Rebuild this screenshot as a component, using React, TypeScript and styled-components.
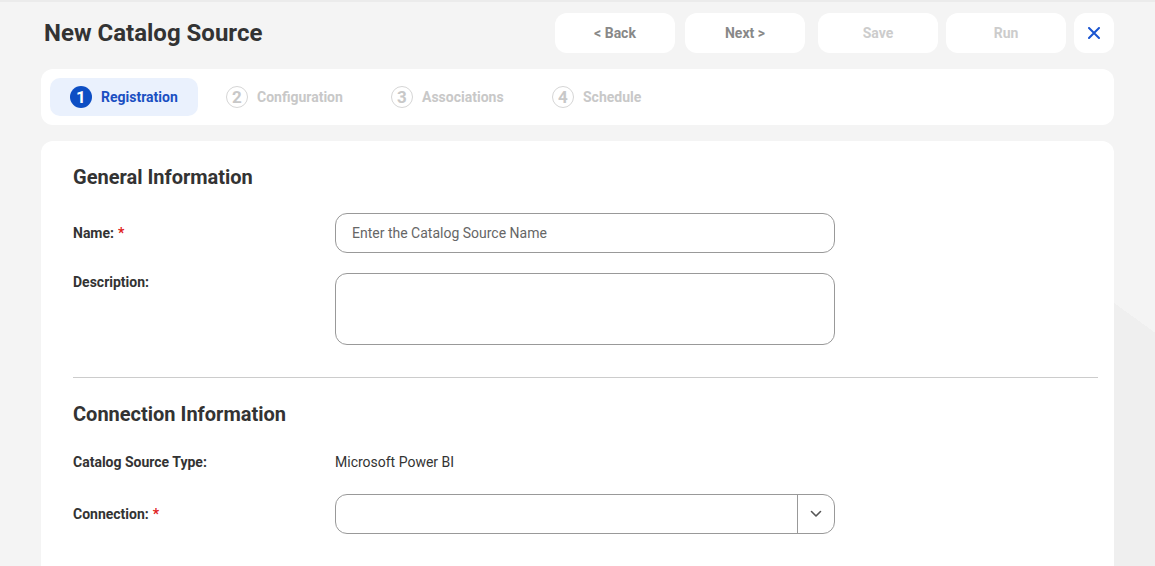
import React from "react";
import styled, { createGlobalStyle } from "styled-components";

const GlobalStyle = createGlobalStyle`
  html, body {
    margin: 0;
    padding: 0;
    height: 100%;
  }
  body {
    font-family: Roboto, "Liberation Sans", Arial, sans-serif;
    color: #333333;
    background-color: #f4f4f4;
    background-image: linear-gradient(216deg, transparent 24px, #efefef 24px);
    background-size: 41px 263px;
    background-position: right bottom;
    background-repeat: no-repeat;
    border-top: 2px solid #ebebeb;
    box-sizing: border-box;
    overflow: hidden;
  }
  * {
    box-sizing: border-box;
  }
`;

const Page = styled.div`
  padding: 11px 41px 0 41px;
  display: flex;
  flex-direction: column;
  height: 564px;
`;

const TopBar = styled.div`
  display: flex;
  align-items: center;
  justify-content: space-between;
  height: 40px;
`;

const Title = styled.h1`
  margin: 0 0 0 3px;
  font-size: 24px;
  font-weight: 700;
  color: #333333;
`;

const Actions = styled.div`
  display: flex;
  align-items: center;
  gap: 8px;
`;

const ButtonGroup = styled.div`
  display: flex;
  gap: 10px;
  margin-right: 5px;
`;

const ActionButton = styled.button<{ $disabled?: boolean }>`
  width: 120px;
  height: 40px;
  border: none;
  border-radius: 12px;
  background: #ffffff;
  font-family: inherit;
  font-size: 14px;
  font-weight: 700;
  color: ${(p) => (p.$disabled ? "#cccccc" : "#888888")};
  cursor: ${(p) => (p.$disabled ? "default" : "pointer")};
`;

const CloseButton = styled.button`
  width: 40px;
  height: 40px;
  border: none;
  border-radius: 12px;
  background: #ffffff;
  display: flex;
  align-items: center;
  justify-content: center;
  cursor: pointer;
  padding: 0;
`;

const Stepper = styled.div`
  margin-top: 16px;
  height: 56px;
  background: #ffffff;
  border-radius: 12px;
  display: flex;
  align-items: center;
  padding: 0 9px;
`;

const Step = styled.div<{ $active?: boolean; $width: number }>`
  display: flex;
  align-items: center;
  gap: 9px;
  height: 38px;
  width: ${(p) => p.$width}px;
  padding-left: ${(p) => (p.$active ? "20px" : "28px")};
  border-radius: 10px;
  background: ${(p) => (p.$active ? "#eaf1fd" : "transparent")};
  font-size: 14px;
  font-weight: 700;
  color: ${(p) => (p.$active ? "#1a4fc2" : "#c8c8c8")};
`;

const StepNumber = styled.span<{ $active?: boolean }>`
  width: 22px;
  height: 22px;
  border-radius: 50%;
  display: flex;
  align-items: center;
  justify-content: center;
  font-size: 17px;
  font-weight: 700;
  background: ${(p) => (p.$active ? "#0d4ec4" : "transparent")};
  color: ${(p) => (p.$active ? "#ffffff" : "#c8c8c8")};
  border: ${(p) => (p.$active ? "none" : "1.5px solid #d6d6d6")};
`;

const Card = styled.div`
  margin-top: 16px;
  flex: 1;
  background: #ffffff;
  border-radius: 12px 12px 0 0;
  padding: 24px 16px 0 32px;
`;

const SectionTitle = styled.h2`
  margin: 0;
  font-size: 20px;
  font-weight: 700;
  color: #333333;
  line-height: 24px;
`;

const FormRow = styled.div<{ $top: number; $align?: string }>`
  display: grid;
  grid-template-columns: 262px 500px;
  align-items: ${(p) => p.$align || "center"};
  margin-top: ${(p) => p.$top}px;
`;

const Label = styled.label<{ $pt?: number }>`
  font-size: 14px;
  font-weight: 700;
  color: #333333;
  padding-top: ${(p) => p.$pt || 0}px;
`;

const Required = styled.span`
  color: #e02020;
  margin-left: 4px;
`;

const TextInput = styled.input`
  height: 40px;
  width: 500px;
  border: 1px solid #999999;
  border-radius: 12px;
  padding: 0 16px;
  font-family: inherit;
  font-size: 14px;
  color: #333333;
  outline: none;
  &::placeholder {
    color: #666666;
  }
`;

const TextArea = styled.textarea`
  height: 72px;
  width: 500px;
  border: 1px solid #999999;
  border-radius: 12px;
  padding: 10px 16px;
  font-family: inherit;
  font-size: 14px;
  resize: none;
  outline: none;
  display: block;
`;

const Divider = styled.hr`
  margin: 32px 0 24px 0;
  border: none;
  border-top: 1px solid #cccccc;
`;

const Value = styled.span`
  font-size: 14px;
  color: #333333;
`;

const Select = styled.div`
  height: 40px;
  width: 500px;
  border: 1px solid #999999;
  border-radius: 12px;
  display: flex;
  align-items: stretch;
`;

const SelectValue = styled.div`
  flex: 1;
`;

const SelectToggle = styled.div`
  width: 37px;
  border-left: 1px solid #999999;
  display: flex;
  align-items: center;
  justify-content: center;
`;

const steps = [
  { n: 1, label: "Registration", width: 148, active: true },
  { n: 2, label: "Configuration", width: 165 },
  { n: 3, label: "Associations", width: 161 },
  { n: 4, label: "Schedule", width: 140 },
];

export default function App() {
  return (
    <>
      <GlobalStyle />
      <Page>
        <TopBar>
          <Title>New Catalog Source</Title>
          <Actions>
            <ButtonGroup>
              <ActionButton>&lt; Back</ActionButton>
              <ActionButton>Next &gt;</ActionButton>
            </ButtonGroup>
            <ActionButton $disabled>Save</ActionButton>
            <ActionButton $disabled>Run</ActionButton>
            <CloseButton aria-label="Close">
              <svg width="12" height="12" viewBox="0 0 12 12">
                <path
                  d="M1 1 L11 11 M11 1 L1 11"
                  stroke="#1a55d0"
                  strokeWidth="2"
                  strokeLinecap="round"
                />
              </svg>
            </CloseButton>
          </Actions>
        </TopBar>

        <Stepper>
          {steps.map((s) => (
            <Step key={s.n} $active={s.active} $width={s.width}>
              <StepNumber $active={s.active}>{s.n}</StepNumber>
              {s.label}
            </Step>
          ))}
        </Stepper>

        <Card>
          <SectionTitle>General Information</SectionTitle>
          <FormRow $top={24}>
            <Label>
              Name:<Required>*</Required>
            </Label>
            <TextInput placeholder="Enter the Catalog Source Name" />
          </FormRow>
          <FormRow $top={20} $align="start">
            <Label $pt={1}>Description:</Label>
            <TextArea />
          </FormRow>

          <Divider />

          <SectionTitle>Connection Information</SectionTitle>
          <FormRow $top={28}>
            <Label>Catalog Source Type:</Label>
            <Value>Microsoft Power BI</Value>
          </FormRow>
          <FormRow $top={24}>
            <Label>
              Connection:<Required>*</Required>
            </Label>
            <Select>
              <SelectValue />
              <SelectToggle>
                <svg width="12" height="8" viewBox="0 0 12 8">
                  <path
                    d="M1.5 1.5 L6 6 L10.5 1.5"
                    fill="none"
                    stroke="#555555"
                    strokeWidth="1.6"
                    strokeLinecap="round"
                    strokeLinejoin="round"
                  />
                </svg>
              </SelectToggle>
            </Select>
          </FormRow>
        </Card>
      </Page>
    </>
  );
}
